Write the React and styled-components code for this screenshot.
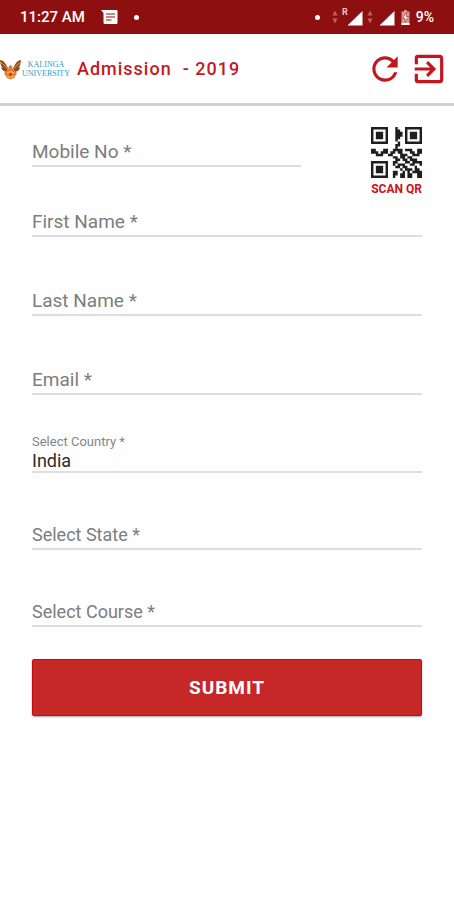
import React from 'react';
import styled, { createGlobalStyle } from 'styled-components';
import { MdRefresh, MdExitToApp } from 'react-icons/md';

const GlobalStyle = createGlobalStyle`
  * {
    box-sizing: border-box;
  }
  body {
    margin: 0;
    background: #fefefe;
    font-family: Roboto, sans-serif;
  }
`;

const StatusBar = styled.div`
  display: flex;
  align-items: center;
  justify-content: space-between;
  height: 34px;
  padding: 0 20px;
  background: #8e0f0f;
  color: #ffffff;
  font-size: 14px;
  font-weight: 500;
`;

const Clock = styled.span`
  font-size: 15px;
`;

const StatusGroup = styled.div`
  display: flex;
  align-items: center;
  gap: ${({ $gap }) => $gap}px;
`;

const Dot = styled.span`
  width: 5px;
  height: 5px;
  border-radius: 50%;
  background: #ffffff;
`;

const SignalGroup = styled.div`
  display: flex;
  align-items: center;
  gap: 4px;
  padding-left: 6px;
`;

const Header = styled.header`
  display: flex;
  align-items: center;
  height: 72px;
  padding-right: 6px;
  border-bottom: 3px solid #d0d0d0;
  background: #ffffff;
`;

const Logo = styled.div`
  display: flex;
  align-items: center;
`;

const LogoText = styled.div`
  display: flex;
  flex-direction: column;
  align-items: center;
  font-family: 'Liberation Serif', serif;
  font-size: 8px;
  line-height: 9px;
  color: #2a9fc4;
`;

const Title = styled.h1`
  flex: 1;
  margin: 0 0 0 7px;
  font-size: 18px;
  font-weight: 500;
  letter-spacing: 1px;
  white-space: pre;
  color: #c21a1f;
`;

const Actions = styled.div`
  display: flex;
  gap: 6px;
`;

const IconButton = styled.button`
  display: flex;
  padding: 0;
  border: none;
  background: none;
  color: #c4161c;
  font-size: 38px;
  cursor: pointer;
`;

const Form = styled.form`
  display: flex;
  flex-direction: column;
  padding: 20px 32px;
`;

const TopRow = styled.div`
  display: flex;
  align-items: flex-start;
  justify-content: space-between;
  gap: 70px;
  margin-bottom: 13px;
`;

const MobileSlot = styled.div`
  flex: 1;
  padding-top: 13px;
`;

const ScanButton = styled.button`
  display: flex;
  flex-direction: column;
  align-items: center;
  gap: 4px;
  padding: 1px 0 0;
  border: none;
  background: none;
  color: #c4161c;
  font-family: inherit;
  font-size: 12px;
  font-weight: 700;
  line-height: 14px;
  cursor: pointer;
`;

const Fields = styled.div`
  display: flex;
  flex-direction: column;
  gap: 51px;
`;

const Selects = styled.div`
  display: flex;
  flex-direction: column;
  gap: 49px;
  margin-top: 40px;
`;

const Field = styled.div`
  display: grid;
  font-size: ${({ $size }) => $size}px;
`;

const Label = styled.label`
  grid-area: 1 / 1;
  line-height: 26px;
  color: #7d7d7d;
  pointer-events: none;
`;

const FloatedLabel = styled.label`
  font-size: 13px;
  line-height: 14px;
  color: #858585;
`;

const TextInput = styled.input`
  grid-area: 1 / 1;
  width: 100%;
  height: 28px;
  padding: 0;
  border: none;
  border-bottom: 2px solid #dedede;
  border-radius: 0;
  outline: none;
  background: transparent;
  color: #2b2b2b;
  font: inherit;
`;

const SelectInput = styled.select`
  grid-area: ${({ $floated }) => ($floated ? '2 / 1' : '1 / 1')};
  width: 100%;
  height: ${({ $floated }) => ($floated ? 24 : 28)}px;
  padding: 0;
  border: none;
  border-bottom: 2px solid #dedede;
  border-radius: 0;
  outline: none;
  appearance: none;
  background: transparent;
  color: #2b2b2b;
  font: inherit;
`;

const SubmitButton = styled.button`
  height: 57px;
  margin-top: 32px;
  border: 1px solid #c00d10;
  border-radius: 2px;
  background: #c62828;
  box-shadow: 0 1px 2px rgba(0, 0, 0, 0.35);
  color: #ffffff;
  font-family: inherit;
  font-size: 19px;
  font-weight: 700;
  letter-spacing: 1px;
  cursor: pointer;
`;

const qrRows = [
  '111111100010001111111',
  '100000100011001000001',
  '101110100011101011101',
  '101110100011101011101',
  '101110100011001011101',
  '100000100010001000001',
  '111111100001001111111',
  '000000000011000000000',
  '000000000010000000000',
  '110001100111101110011',
  '111011101101100011011',
  '001110011000111001110',
  '000000000110110110000',
  '000000000011011011100',
  '111111100110001101111',
  '100000100101110011001',
  '101110100011011000100',
  '101110100000101110110',
  '101110100110010101111',
  '100000100110110110011',
  '111111100100110110011',
];

const QrCode = () => (
  <svg width="51" height="51" viewBox="0 0 21 21" aria-hidden="true">
    <path
      fill="#1e1e1e"
      d={qrRows
        .map((row, y) => row.split('').map((cell, x) => (cell === '1' ? `M${x} ${y}h1v1h-1z` : '')).join(''))
        .join('')}
    />
  </svg>
);

const MessageIcon = () => (
  <svg width="17" height="14" viewBox="0 0 17 14" aria-hidden="true">
    <path d="M0 0H15.5Q16.5 0 16.5 1V13Q16.5 14 15.5 14H4Q2.500 14 2.500 12.500V3Z" fill="#fff" />
    <path d="M5 4H14M5 7H14M5 10H10.500" stroke="#8e0f0f" strokeWidth="1.200" />
  </svg>
);

const DataArrows = () => (
  <svg width="6" height="14" viewBox="0 0 6 14" fill="#b96464" aria-hidden="true">
    <path d="M3 0.500L5.500 5.500H0.500ZM3 13.500L0.500 8.500H5.500Z" />
  </svg>
);

const Signal = ({ roaming }) => (
  <svg width={roaming ? 21 : 16} height="18" viewBox={roaming ? '-5 -3 21 18' : '0 -3 16 18'} aria-hidden="true">
    <path d="M15.500 0V14.500H0.500Z" fill="#fff" />
    {roaming && (
      <text x="-5" y="4" fontSize="9" fontWeight="700" fill="#e6c4c4">R</text>
    )}
  </svg>
);

const Battery = () => (
  <svg width="9" height="15" viewBox="0 0 9 15" aria-hidden="true">
    <path d="M3 0H6V1.500H8.500V15H0.500V1.500H3Z" fill="#d59a9a" />
    <path d="M0.500 13H8.500V15H0.500Z" fill="#fff" />
    <path d="M5.500 2.500L1.500 8H4V12L7.500 6.500H5Z" fill="#fff" stroke="#8e0f0f" strokeWidth="0.500" />
  </svg>
);

const Emblem = () => (
  <svg width="22" height="22" viewBox="0 0 22 22" aria-hidden="true">
    <path d="M0 2Q3 2 5 5L9 12L6 14Q2 13 1 9L3 10Q0 7 0 2Z" fill="#8a4a24" />
    <path d="M21 2Q18 2 16 5L12 12L15 14Q20 13 20 9L18 10Q21 7 21 2Z" fill="#8a4a24" />
    <path d="M0 4Q4 6 8 12M21 4Q17 6 13 12" stroke="#e0a23c" fill="none" />
    <path d="M10.500 7Q13 8 12.500 11L17 15L14 20L10.500 21.500L7 20L4 15L8.500 11Q8 8 10.500 7Z" fill="#ec7a2d" />
    <path d="M7 15Q10.500 12 14 15M7 18Q10.500 21 14 18" stroke="#f8c778" fill="none" />
    <circle cx="10.500" cy="16.500" r="1.500" fill="#b7431d" />
  </svg>
);

const TextField = ({ id, label, type = 'text' }) => (
  <Field $size={19}>
    <Label htmlFor={id}>{label}</Label>
    <TextInput id={id} type={type} required />
  </Field>
);

const SelectField = ({ id, label, value }) => {
  const LabelTag = value ? FloatedLabel : Label;
  return (
    <Field $size={18}>
      <LabelTag htmlFor={id}>{label}</LabelTag>
      <SelectInput id={id} $floated={Boolean(value)} defaultValue={value || ''}>
        <option value={value || ''}>{value || ''}</option>
      </SelectInput>
    </Field>
  );
};

export const App = () => {
  return (
    <>
      <GlobalStyle />
      <StatusBar>
        <StatusGroup $gap={16}>
          <Clock>11:27 AM</Clock>
          <MessageIcon />
          <Dot />
        </StatusGroup>
        <StatusGroup $gap={6}>
          <Dot />
          <SignalGroup>
            <StatusGroup $gap={4}>
              <DataArrows />
              <Signal roaming />
            </StatusGroup>
            <StatusGroup $gap={6}>
              <DataArrows />
              <Signal />
            </StatusGroup>
          </SignalGroup>
          <Battery />
          <span>9%</span>
        </StatusGroup>
      </StatusBar>
      <Header>
        <Logo>
          <Emblem />
          <LogoText>
            <span>KALINGA</span>
            <span>UNIVERSITY</span>
          </LogoText>
        </Logo>
        <Title>{'Admission  - 2019'}</Title>
        <Actions>
          <IconButton type="button" aria-label="Refresh"><MdRefresh /></IconButton>
          <IconButton type="button" aria-label="Exit"><MdExitToApp /></IconButton>
        </Actions>
      </Header>
      <Form onSubmit={(e) => e.preventDefault()}>
        <TopRow>
          <MobileSlot>
            <TextField id="mobile" label="Mobile No *" type="tel" />
          </MobileSlot>
          <ScanButton type="button">
            <QrCode />
            SCAN QR
          </ScanButton>
        </TopRow>
        <Fields>
          <TextField id="first" label="First Name *" />
          <TextField id="last" label="Last Name *" />
          <TextField id="email" label="Email *" type="email" />
        </Fields>
        <Selects>
          <SelectField id="country" label="Select Country *" value="India" />
          <SelectField id="state" label="Select State *" />
          <SelectField id="course" label="Select Course *" />
        </Selects>
        <SubmitButton type="submit">SUBMIT</SubmitButton>
      </Form>
    </>
  );
};

export default App;
